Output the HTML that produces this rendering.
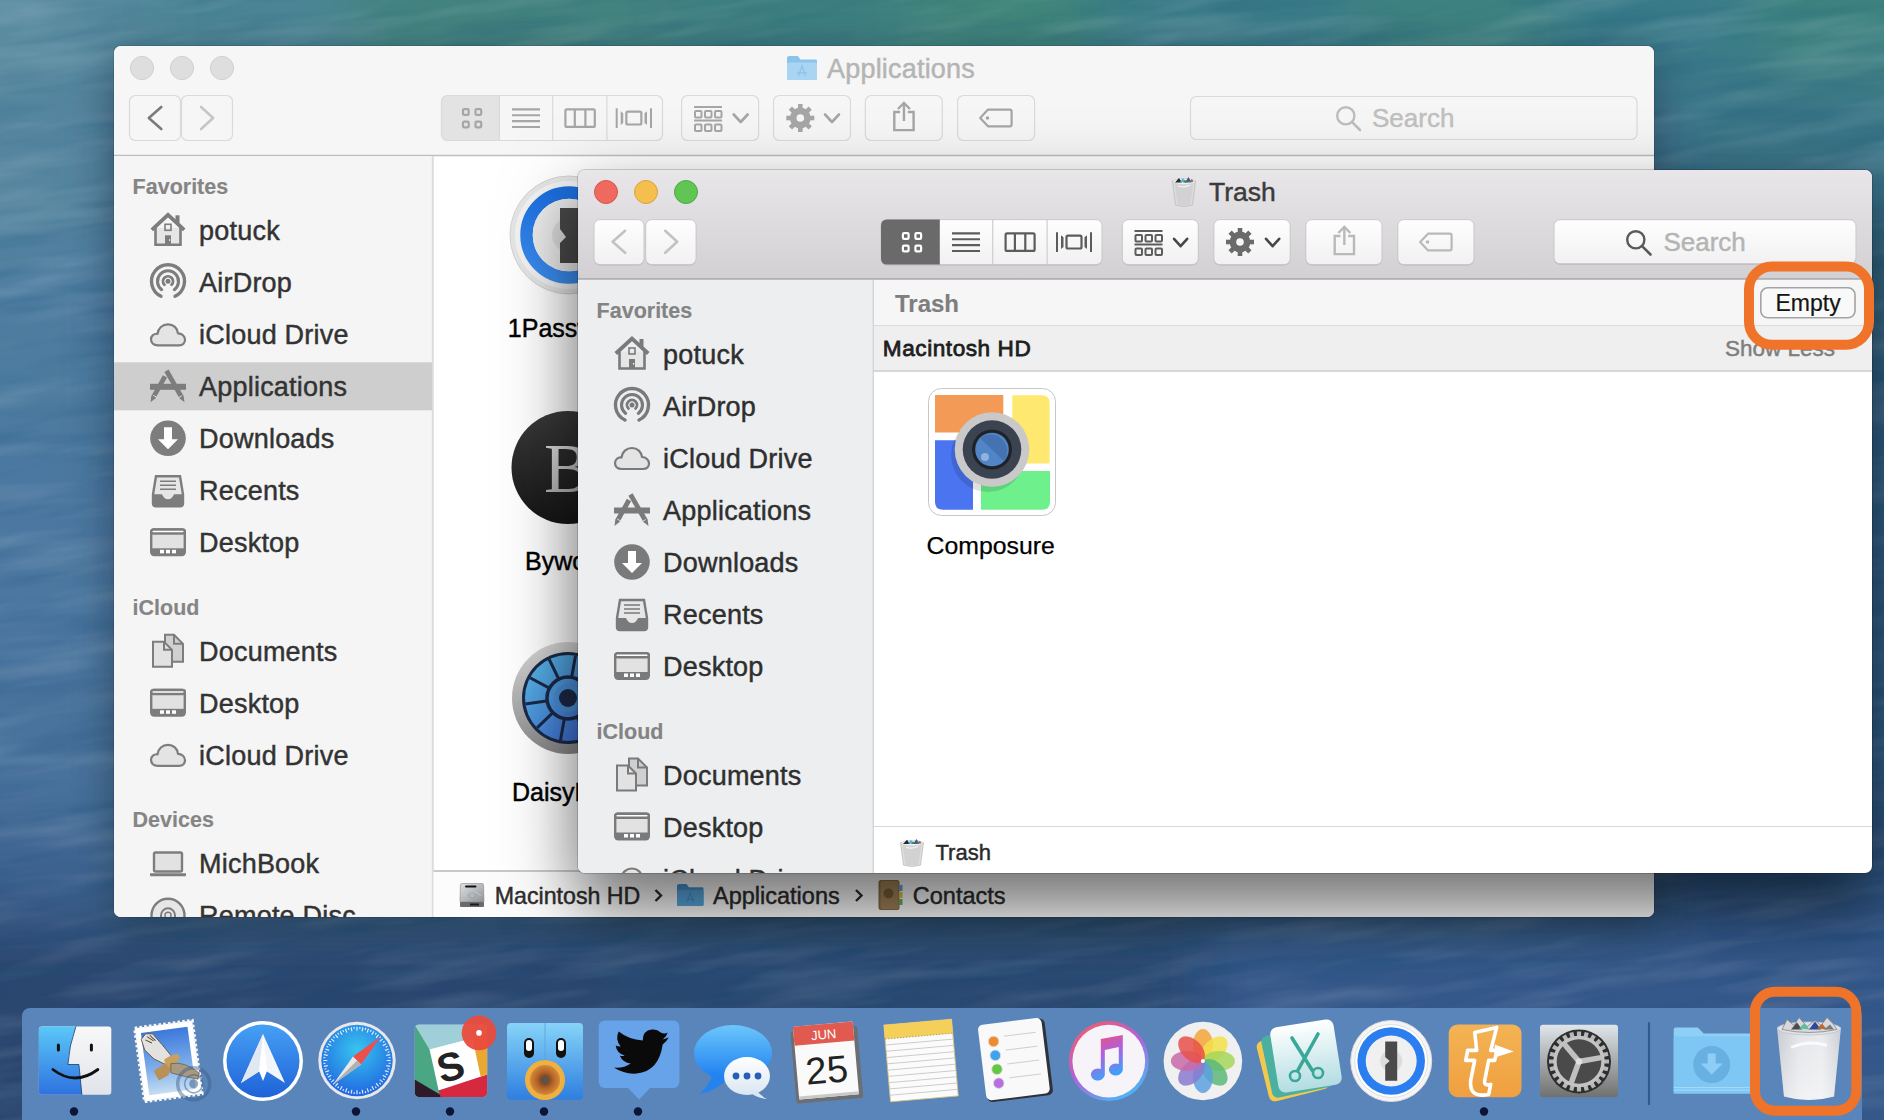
<!DOCTYPE html><html><head><meta charset="utf-8"><style>
*{box-sizing:border-box;margin:0;padding:0}
html,body{width:1884px;height:1120px;overflow:hidden}
body{position:relative;font-family:"Liberation Sans",sans-serif;background:#3f6c8c}
.abs{position:absolute}
.win{position:absolute;overflow:hidden}


</style></head><body>
<svg class="abs" width="1884" height="1120" style="left:0;top:0"><defs><filter id="wb" x="-20%" y="-20%" width="140%" height="140%"><feGaussianBlur stdDeviation="32"/></filter><filter id="tx" x="0" y="0" width="100%" height="100%"><feTurbulence type="fractalNoise" baseFrequency="0.006 0.045" numOctaves="3" seed="7"/><feColorMatrix type="matrix" values="0 0 0 0 1  0 0 0 0 1  0 0 0 0 1  1.2 0 0 0 -0.55"/></filter></defs><g filter="url(#wb)"><rect x="-200" y="-200" width="350" height="280" fill="#5a8ca0"/><rect x="150" y="-200" width="200" height="280" fill="#4c8594"/><rect x="350" y="-200" width="300" height="280" fill="#43837f"/><rect x="650" y="-200" width="250" height="280" fill="#3c7e80"/><rect x="900" y="-200" width="200" height="280" fill="#40857a"/><rect x="1100" y="-200" width="250" height="280" fill="#3a7b88"/><rect x="1350" y="-200" width="200" height="280" fill="#3e8180"/><rect x="1550" y="-200" width="200" height="280" fill="#3b7c8a"/><rect x="1750" y="-200" width="400" height="280" fill="#3e8280"/><rect x="-200" y="80" width="314" height="170" fill="#55859f"/><rect x="-200" y="250" width="314" height="200" fill="#4e7ba0"/><rect x="-200" y="450" width="314" height="200" fill="#4b77a0"/><rect x="-200" y="650" width="314" height="170" fill="#49729c"/><rect x="-200" y="820" width="314" height="100" fill="#3d6290"/><rect x="1654" y="80" width="500" height="120" fill="#3a7488"/><rect x="1654" y="200" width="500" height="150" fill="#356a88"/><rect x="1654" y="350" width="500" height="200" fill="#33628a"/><rect x="1654" y="550" width="500" height="250" fill="#335f8a"/><rect x="1654" y="800" width="500" height="120" fill="#2d5483"/><rect x="-200" y="920" width="800" height="400" fill="#2a4670"/><rect x="600" y="920" width="600" height="400" fill="#2b4872"/><rect x="1200" y="920" width="1000" height="400" fill="#34598a"/><rect x="114" y="80" width="1540" height="840" fill="#3f6a90"/></g><filter id="tx2" x="0" y="0" width="100%" height="100%"><feTurbulence type="fractalNoise" baseFrequency="0.008 0.06" numOctaves="3" seed="21"/><feColorMatrix type="matrix" values="0 0 0 0 0  0 0 0 0 0.05  0 0 0 0 0.15  -1.3 0 0 0 0.72"/></filter><g transform="rotate(-8 942 560)"><rect x="-200" y="-200" width="2300" height="1500" filter="url(#tx)" opacity="0.25"/><rect x="-200" y="-200" width="2300" height="1500" filter="url(#tx2)" opacity="0.25"/></g></svg>
<div class="win" style="left:114px;top:46px;width:1540px;height:871px;background:#fff;border-radius:7px;box-shadow:0 0 0 1px rgba(0,0,0,0.10),0 10px 40px rgba(0,0,0,0.30)"><svg class="abs" width="1540" height="871" style="left:0;top:0" font-family='"Liberation Sans",sans-serif'><g transform="translate(-114,-46)"><rect x="114" y="46" width="1540" height="109" rx="0" fill="#f6f6f6" /><path d="M114 155.5 H1654" stroke="#bebebe" stroke-width="1.6"/><circle cx="142" cy="68" r="11.6" fill="#dedede" stroke="#d0d0d0" stroke-width="1"/><circle cx="182" cy="68" r="11.6" fill="#dedede" stroke="#d0d0d0" stroke-width="1"/><circle cx="222" cy="68" r="11.6" fill="#dedede" stroke="#d0d0d0" stroke-width="1"/><g transform="translate(787,56)"><path d="M0 2 Q0 0 2 0 H10.8 L13.5 3.6 H28.5 Q30 3.6 30 4.8 V22.5 Q30 24 28.5 24 H1.5 Q0 24 0 22.5 Z" fill="#8cc3ea"/><rect x="0" y="6.5" width="30" height="17.5" rx="1.5" fill="#a9d4f2"/><path d="M11.4 20.4 L15.0 9.6 L18.6 20.4 M9.9 16.8 H20.1" stroke="#8cc3ea" stroke-width="1.2" fill="none"/></g><text x="827" y="77.8" font-size="27" fill="#b4b4b4" stroke="#b4b4b4" stroke-width="0.45" font-weight="400" letter-spacing="0.2">Applications</text><rect x="129.5" y="95.5" width="51" height="45" rx="6" fill="none" stroke="#dadada" stroke-width="1.2" /><rect x="181.5" y="95.5" width="51" height="45" rx="6" fill="none" stroke="#dadada" stroke-width="1.2" /><path d="M161.3 107 L148.8 118 L161.3 129" fill="none" stroke="#7b7b7b" stroke-width="2.6" stroke-linecap="round" stroke-linejoin="round"/><path d="M201.1 107 L213.1 118 L201.1 129" fill="none" stroke="#c6c6c6" stroke-width="2.6" stroke-linecap="round" stroke-linejoin="round"/><path d="M447.5 95.5 H499.4 V140.5 H447.5 Q441.5 140.5 441.5 134.5 V101.5 Q441.5 95.5 447.5 95.5Z" fill="#e3e3e3"/><rect x="441.5" y="95.5" width="221" height="45" rx="6" fill="none" stroke="#dadada" stroke-width="1.2" /><path d="M499.4 96 V140" stroke="#dadada" stroke-width="1.2"/><path d="M552.7 96 V140" stroke="#dadada" stroke-width="1.2"/><path d="M606.9 96 V140" stroke="#dadada" stroke-width="1.2"/><rect x="463.0" y="109.2" width="5.7" height="5.7" rx="1.2" fill="none" stroke="#a6a6a6" stroke-width="2.2"/><rect x="463.0" y="121.7" width="5.7" height="5.7" rx="1.2" fill="none" stroke="#a6a6a6" stroke-width="2.2"/><rect x="475.5" y="109.2" width="5.7" height="5.7" rx="1.2" fill="none" stroke="#a6a6a6" stroke-width="2.2"/><rect x="475.5" y="121.7" width="5.7" height="5.7" rx="1.2" fill="none" stroke="#a6a6a6" stroke-width="2.2"/><path d="M512 109.40 H540" stroke="#a6a6a6" stroke-width="2.2"/><path d="M512 115.27 H540" stroke="#a6a6a6" stroke-width="2.2"/><path d="M512 121.13 H540" stroke="#a6a6a6" stroke-width="2.2"/><path d="M512 127.00 H540" stroke="#a6a6a6" stroke-width="2.2"/><rect x="565.4" y="109.3" width="29.400000000000002" height="17.6" rx="1.5" fill="none" stroke="#a6a6a6" stroke-width="2.2"/><path d="M574.8 109.2 V127.0 M585.4 109.2 V127.0" stroke="#a6a6a6" stroke-width="2.2"/><rect x="626.35" y="111.7" width="15" height="12.8" rx="1.5" fill="none" stroke="#a6a6a6" stroke-width="2.2"/><path d="M616.7 108.2 V128.0 M651.0 108.2 V128.0" stroke="#a6a6a6" stroke-width="2"/><path d="M620.7 111.2 L623.2 113.2 V123.0 L620.7 125.0 Z" fill="#a6a6a6"/><path d="M647.0 111.2 L644.5 113.2 V123.0 L647.0 125.0 Z" fill="#a6a6a6"/><rect x="681.6" y="95.5" width="77" height="45" rx="6" fill="none" stroke="#dadada" stroke-width="1.2" /><path d="M694 107 H722 M694 120.5 H722" stroke="#a6a6a6" stroke-width="2"/><rect x="695" y="111" width="6.5" height="6.5" rx="1" fill="none" stroke="#a6a6a6" stroke-width="2"/><rect x="705" y="111" width="6.5" height="6.5" rx="1" fill="none" stroke="#a6a6a6" stroke-width="2"/><rect x="715" y="111" width="6.5" height="6.5" rx="1" fill="none" stroke="#a6a6a6" stroke-width="2"/><rect x="695" y="124.5" width="6.5" height="6.5" rx="1" fill="none" stroke="#a6a6a6" stroke-width="2"/><rect x="705" y="124.5" width="6.5" height="6.5" rx="1" fill="none" stroke="#a6a6a6" stroke-width="2"/><rect x="715" y="124.5" width="6.5" height="6.5" rx="1" fill="none" stroke="#a6a6a6" stroke-width="2"/><path d="M733.7 114.5 L740.7 122.0 L747.7 114.5" fill="none" stroke="#a6a6a6" stroke-width="2.6" stroke-linecap="round" stroke-linejoin="round"/><rect x="773.5" y="95.5" width="77" height="45" rx="6" fill="none" stroke="#dadada" stroke-width="1.2" /><rect x="798.0" y="104" width="4.6" height="14" fill="#a6a6a6" transform="rotate(0 800.3 118)"/><rect x="798.0" y="104" width="4.6" height="14" fill="#a6a6a6" transform="rotate(45 800.3 118)"/><rect x="798.0" y="104" width="4.6" height="14" fill="#a6a6a6" transform="rotate(90 800.3 118)"/><rect x="798.0" y="104" width="4.6" height="14" fill="#a6a6a6" transform="rotate(135 800.3 118)"/><rect x="798.0" y="104" width="4.6" height="14" fill="#a6a6a6" transform="rotate(180 800.3 118)"/><rect x="798.0" y="104" width="4.6" height="14" fill="#a6a6a6" transform="rotate(225 800.3 118)"/><rect x="798.0" y="104" width="4.6" height="14" fill="#a6a6a6" transform="rotate(270 800.3 118)"/><rect x="798.0" y="104" width="4.6" height="14" fill="#a6a6a6" transform="rotate(315 800.3 118)"/><circle cx="800.3" cy="118" r="10.4" fill="#a6a6a6"/><circle cx="800.3" cy="118" r="3.8" fill="#f6f6f6"/><path d="M825 114.5 L832.0 122.0 L839 114.5" fill="none" stroke="#a6a6a6" stroke-width="2.6" stroke-linecap="round" stroke-linejoin="round"/><rect x="865.3" y="95.5" width="77" height="45" rx="6" fill="none" stroke="#dadada" stroke-width="1.2" /><path d="M900.1 112 H894.3000000000001 V130.10000000000002 H913.6 V112 H907.8000000000001" fill="none" stroke="#a6a6a6" stroke-width="2.4"/><path d="M903.95 121 V103.5" stroke="#a6a6a6" stroke-width="2.4"/><path d="M897.95 109 L903.95 103 L909.95 109" fill="none" stroke="#a6a6a6" stroke-width="2.4" stroke-linejoin="miter"/><rect x="957.6" y="95.5" width="77" height="45" rx="6" fill="none" stroke="#dadada" stroke-width="1.2" /><path d="M988 109.60000000000001 H1009.8 Q1011.5999999999999 109.60000000000001 1011.5999999999999 111.4 V124.5 Q1011.5999999999999 126.3 1009.8 126.3 H988 L980.2 117.95 Z" fill="none" stroke="#a6a6a6" stroke-width="2.2" stroke-linejoin="round"/><circle cx="987.5" cy="117.95" r="1.8" fill="#a6a6a6"/><rect x="1190.5" y="96.5" width="446.5" height="43" rx="6" fill="none" stroke="#dadada" stroke-width="1.2" /><circle cx="1345.8" cy="115.8" r="8.6" fill="none" stroke="#bdbdbd" stroke-width="2.4"/><path d="M1352.1 122.1 L1360 130" stroke="#bdbdbd" stroke-width="2.6" stroke-linecap="round"/><text x="1372" y="127.4" font-size="26" fill="#c0c0c0" stroke="#c0c0c0" stroke-width="0.45" font-weight="400" >Search</text><rect x="114" y="156.3" width="318.5" height="871" rx="0" fill="#f5f5f5" /><path d="M432.8 156 V917" stroke="#dcdcdc" stroke-width="2"/><rect x="114" y="362.3" width="318" height="48" rx="0" fill="#cecece" /><text x="132.6" y="194.3" font-size="21.5" fill="#858585" stroke="#858585" stroke-width="0.15" font-weight="700" >Favorites</text><g transform="translate(150,212.3)">
<path d="M5.5 15.5 V32.5 H30.5 V15.5" fill="#e6e6e6" stroke="#7d7d7d" stroke-width="2.6" stroke-linejoin="miter"/>
<path d="M1.8 17.5 L18 2.6 L34.2 17.5" fill="none" stroke="#7d7d7d" stroke-width="3.8" stroke-linejoin="miter"/>
<rect x="25.5" y="3" width="4" height="8" fill="#7d7d7d"/>
<rect x="15" y="12" width="6" height="6" fill="none" stroke="#7d7d7d" stroke-width="1.6"/>
<rect x="15" y="23" width="6" height="10" fill="#7d7d7d"/>
<rect x="19" y="27" width="1.2" height="1.5" fill="#fff"/>
</g><text x="199" y="240.3" font-size="27" fill="#333333" stroke="#333333" stroke-width="0.45" font-weight="400" letter-spacing="0.22">potuck</text><g transform="translate(168,281.3)" fill="none" stroke="#7d7d7d" stroke-linecap="round"><path d="M-6.97 14.95 A16.5 16.5 0 1 1 6.97 14.95" stroke-width="3.4"/><path d="M-6.32 8.39 A10.5 10.5 0 1 1 6.32 8.39" stroke-width="3.1"/><path d="M-3.54 3.54 A5.0 5.0 0 1 1 3.54 3.54" stroke-width="2.8"/><circle cx="0" cy="0" r="2.5" fill="#7d7d7d" stroke="none"/></g><text x="199" y="292.3" font-size="27" fill="#333333" stroke="#333333" stroke-width="0.45" font-weight="400" letter-spacing="0.22">AirDrop</text><g transform="translate(150,322.3)"><path d="M8 23 C3 23 1 20 1 17 C1 13.5 4 11 7.5 11.5 C8 6 12.5 2 18 2 C23.5 2 27.5 6 28 11 C32 11 35 14 35 17.5 C35 20.5 33 23 29 23 Z" fill="#e4e4e4" stroke="#7d7d7d" stroke-width="2.2" stroke-linejoin="round"/></g><text x="199" y="344.3" font-size="27" fill="#333333" stroke="#333333" stroke-width="0.45" font-weight="400" letter-spacing="0.22">iCloud Drive</text><g transform="translate(168,385.3)"><rect x="-18" y="-1.5" width="36" height="6" fill="#7d7d7d"/><path d="M-17.50 17.00 L-12.48 12.93 L-0.90 -7.83 L-5.10 -10.17 L-16.67 10.59 Z" fill="#7d7d7d"/><path d="M-14.8 10 L-10.5 12.5" stroke="#e0e0e0" stroke-width="1"/><path d="M16.50 17.00 L15.61 10.60 L0.58 -15.69 L-3.58 -13.31 L11.44 12.98 Z" fill="#7d7d7d"/><path d="M13.8 10.5 L9.5 13" stroke="#e0e0e0" stroke-width="1"/></g><text x="199" y="396.3" font-size="27" fill="#333333" stroke="#333333" stroke-width="0.45" font-weight="400" letter-spacing="0.22">Applications</text><g transform="translate(168,438.3)"><circle r="17.8" fill="#7d7d7d"/>
<path d="M-4 -11 H4 V1 H10 L0 11 L-10 1 H-4 Z" fill="#fff"/></g><text x="199" y="448.3" font-size="27" fill="#333333" stroke="#333333" stroke-width="0.45" font-weight="400" letter-spacing="0.22">Downloads</text><g transform="translate(152,474.3)">
<path d="M4 2 H28 L31 20 V29 Q31 32 28 32 H4 Q1 32 1 29 V20 Z" fill="#e6e6e6" stroke="#7d7d7d" stroke-width="2.4"/>
<path d="M1 20 H10 Q12 25 16 25 Q20 25 22 20 H31 V29 Q31 32 28 32 H4 Q1 32 1 29 Z" fill="#7d7d7d"/>
<path d="M8 7 H24 M8 11 H24 M8 15 H24" stroke="#7d7d7d" stroke-width="1.6"/>
</g><text x="199" y="500.3" font-size="27" fill="#333333" stroke="#333333" stroke-width="0.45" font-weight="400" letter-spacing="0.22">Recents</text><g transform="translate(150,528.3)">
<rect x="1.2" y="1.2" width="33.6" height="25.6" rx="3" fill="#e2e2e2" stroke="#7d7d7d" stroke-width="2.4"/>
<rect x="1.2" y="1.2" width="33.6" height="4" rx="2" fill="#fff" stroke="#7d7d7d" stroke-width="2.4"/>
<rect x="1.2" y="20" width="33.6" height="6.8" fill="#7d7d7d"/>
<rect x="10" y="21.5" width="4" height="3.5" fill="#fff"/><rect x="16" y="21.5" width="4" height="3.5" fill="#fff"/><rect x="22" y="21.5" width="4" height="3.5" fill="#fff"/>
</g><text x="199" y="552.3" font-size="27" fill="#333333" stroke="#333333" stroke-width="0.45" font-weight="400" letter-spacing="0.22">Desktop</text><text x="132.6" y="614.8" font-size="21.5" fill="#858585" stroke="#858585" stroke-width="0.15" font-weight="700" >iCloud</text><g transform="translate(152,633.8)">
<path d="M13 1 H22 L31 10 V28 H13 Z" fill="#d0d0d0" stroke="#7d7d7d" stroke-width="2"/>
<path d="M22 1 V10 H31" fill="none" stroke="#7d7d7d" stroke-width="2"/>
<path d="M1 8 H12 L20 16 V33 H1 Z" fill="#e2e2e2" stroke="#7d7d7d" stroke-width="2"/>
<path d="M12 8 V16 H20" fill="none" stroke="#7d7d7d" stroke-width="2"/>
</g><text x="199" y="660.8" font-size="27" fill="#333333" stroke="#333333" stroke-width="0.45" font-weight="400" letter-spacing="0.22">Documents</text><g transform="translate(150,688.8)">
<rect x="1.2" y="1.2" width="33.6" height="25.6" rx="3" fill="#e2e2e2" stroke="#7d7d7d" stroke-width="2.4"/>
<rect x="1.2" y="1.2" width="33.6" height="4" rx="2" fill="#fff" stroke="#7d7d7d" stroke-width="2.4"/>
<rect x="1.2" y="20" width="33.6" height="6.8" fill="#7d7d7d"/>
<rect x="10" y="21.5" width="4" height="3.5" fill="#fff"/><rect x="16" y="21.5" width="4" height="3.5" fill="#fff"/><rect x="22" y="21.5" width="4" height="3.5" fill="#fff"/>
</g><text x="199" y="712.8" font-size="27" fill="#333333" stroke="#333333" stroke-width="0.45" font-weight="400" letter-spacing="0.22">Desktop</text><g transform="translate(150,742.8)"><path d="M8 23 C3 23 1 20 1 17 C1 13.5 4 11 7.5 11.5 C8 6 12.5 2 18 2 C23.5 2 27.5 6 28 11 C32 11 35 14 35 17.5 C35 20.5 33 23 29 23 Z" fill="#e4e4e4" stroke="#7d7d7d" stroke-width="2.2" stroke-linejoin="round"/></g><text x="199" y="764.8" font-size="27" fill="#333333" stroke="#333333" stroke-width="0.45" font-weight="400" letter-spacing="0.22">iCloud Drive</text><text x="132.6" y="827.3" font-size="21.5" fill="#858585" stroke="#858585" stroke-width="0.15" font-weight="700" >Devices</text><g transform="translate(150,851.3)">
<rect x="4" y="1.2" width="28" height="19" rx="1.5" fill="#e2e2e2" stroke="#7d7d7d" stroke-width="2.4"/>
<path d="M0 22 H36 V24 Q36 25 35 25 H1 Q0 25 0 24 Z" fill="#7d7d7d"/>
</g><text x="199" y="873.3" font-size="27" fill="#333333" stroke="#333333" stroke-width="0.45" font-weight="400" letter-spacing="0.22">MichBook</text><g transform="translate(168,915.3)"><circle r="16.5" fill="#e6e6e6" stroke="#7d7d7d" stroke-width="2.4"/>
<circle r="7" fill="none" stroke="#7d7d7d" stroke-width="2"/><circle r="3" fill="none" stroke="#7d7d7d" stroke-width="1.5"/></g><text x="199" y="925.3" font-size="27" fill="#333333" stroke="#333333" stroke-width="0.45" font-weight="400" letter-spacing="0.22">Remote Disc</text><defs><linearGradient id="op1" x1="0" y1="0" x2="0" y2="1"><stop offset="0" stop-color="#1d6fe0"/><stop offset="1" stop-color="#3c8ef0"/></linearGradient></defs><circle cx="569" cy="235" r="59" fill="#e6e6e6" stroke="#d2d2d2" stroke-width="1"/><circle cx="569" cy="235" r="54" fill="#f3f3f3"/><circle cx="569" cy="235" r="42.5" fill="none" stroke="url(#op1)" stroke-width="12.5"/><circle cx="569" cy="235" r="36.3" fill="#ececec"/><circle cx="569" cy="235" r="17" fill="#dcdcdc"/><path d="M560 208 H584 V263 H560 V243 L566 237 L560 229 Z" fill="#4a4a4a"/><text x="507.8" y="337.4" font-size="25" fill="#000" stroke="#000" stroke-width="0.45" font-weight="400" >1Password 6</text><defs><linearGradient id="bwg" x1="0" y1="0" x2="0" y2="1"><stop offset="0" stop-color="#3a3a3a"/><stop offset="1" stop-color="#161616"/></linearGradient><linearGradient id="bwb" x1="0" y1="0" x2="0" y2="1"><stop offset="0" stop-color="#e8e8e8"/><stop offset="1" stop-color="#a8a8a8"/></linearGradient></defs><circle cx="568" cy="467.5" r="56.5" fill="url(#bwg)"/><text x="544" y="492" font-family="Liberation Serif" font-size="70" fill="url(#bwb)">B</text><text x="525" y="570" font-size="25" fill="#000" stroke="#000" stroke-width="0.45" font-weight="400" >Byword</text><defs><linearGradient id="ddg" x1="0" y1="0" x2="0" y2="1"><stop offset="0" stop-color="#d8d8d8"/><stop offset="1" stop-color="#8a8a8a"/></linearGradient><linearGradient id="ddb" x1="0" y1="0" x2="1" y2="1"><stop offset="0" stop-color="#5ac0e8"/><stop offset="1" stop-color="#3a5ad0"/></linearGradient></defs><circle cx="568" cy="698" r="56" fill="url(#ddg)"/><circle cx="568" cy="698" r="46" fill="#1c2a48"/><circle cx="568" cy="698" r="43" fill="url(#ddb)"/><path d="M571.5 678.3 L575.5 655.7 M582.4 684.1 L598.9 668.1 M587.8 695.2 L610.6 692.0 M585.7 707.4 L606.0 718.2 M576.8 716.0 L586.8 736.6 M564.5 717.7 L560.5 740.3 M553.6 711.9 L537.1 727.9 M548.2 700.8 L525.4 704.0 M550.3 688.6 L530.0 677.8 M559.2 680.0 L549.2 659.4" stroke="#1c2a48" stroke-width="3"/><circle cx="568" cy="698" r="21" fill="none" stroke="#1c2a48" stroke-width="3.5"/><circle cx="568" cy="698" r="14" fill="#4a90d8"/><circle cx="568" cy="698" r="9" fill="#1c2a48"/><text x="512" y="801" font-size="25" fill="#000" stroke="#000" stroke-width="0.45" font-weight="400" >DaisyDisk</text><rect x="433.5" y="871" width="1220.5" height="46" rx="0" fill="#fcfcfc" /><path d="M433.5 871 H1654" stroke="#c9c9c9" stroke-width="2"/><g transform="translate(460,883)"><defs><linearGradient id="hdg" x1="0" y1="0" x2="1" y2="1"><stop offset="0" stop-color="#dfe3e6"/><stop offset="1" stop-color="#8e9296"/></linearGradient></defs><path d="M2 0.5 H22 Q23.5 0.5 23.6 2 L24 19 H0 L0.4 2 Q0.5 0.5 2 0.5Z" fill="url(#hdg)" stroke="#8a8a8a" stroke-width="0.6"/><rect x="5" y="2.5" width="11.5" height="2" rx="1" fill="#111"/><ellipse cx="12" cy="12" rx="3.4" ry="3" fill="#b4b8bc" stroke="#8a8e92" stroke-width="0.5"/><path d="M3 13 Q12 4 21 13" fill="none" stroke="#c8cbce" stroke-width="0.8"/><rect x="0" y="19" width="24" height="5" rx="1" fill="#6a6a6a"/><rect x="10" y="20.5" width="9" height="2" fill="#1a1a1a"/></g><text x="494.7" y="904" font-size="23.2" fill="#2e2e2e" stroke="#2e2e2e" stroke-width="0.45" font-weight="400" >Macintosh HD</text><path d="M655.5 890 L661 895.5 L655.5 901" fill="none" stroke="#2e2e2e" stroke-width="2.4"/><g transform="translate(677,884)"><path d="M0 2 Q0 0 2 0 H9.5 L11.9 3.3 H25.0 Q26.5 3.3 26.5 4.4 V20.5 Q26.5 22 25.0 22 H1.5 Q0 22 0 20.5 Z" fill="#4a96cf"/><rect x="0" y="5.9" width="26.5" height="16.1" rx="1.5" fill="#5aa9e0"/><path d="M10.1 18.7 L13.2 8.8 L16.4 18.7 M8.7 15.4 H17.8" stroke="#4a96cf" stroke-width="1.2" fill="none"/></g><text x="713" y="904" font-size="23.5" fill="#2e2e2e" stroke="#2e2e2e" stroke-width="0.45" font-weight="400" >Applications</text><path d="M856 890 L861.5 895.5 L856 901" fill="none" stroke="#2e2e2e" stroke-width="2.4"/><g transform="translate(878.5,880)"><rect x="0" y="0" width="21" height="30" rx="2.5" fill="#8a6d43"/><rect x="2" y="1" width="18" height="28" rx="2" fill="#a3845a"/><rect x="20.5" y="5" width="3.5" height="6" fill="#6aa0d0"/><rect x="20.5" y="12" width="3.5" height="6" fill="#e0c040"/><rect x="20.5" y="19" width="3.5" height="6" fill="#70b060"/><circle cx="10.0" cy="13.5" r="5" fill="#7a5e38"/></g><text x="912.8" y="904" font-size="23.5" fill="#2e2e2e" stroke="#2e2e2e" stroke-width="0.45" font-weight="400" >Contacts</text></g></svg></div>
<div class="win" style="left:578px;top:170px;width:1294px;height:703px;background:#fff;border-radius:7px;box-shadow:0 0 0 1px rgba(0,0,0,0.16),0 28px 75px rgba(0,0,0,0.5),0 40px 50px rgba(0,0,0,0.15)"><svg class="abs" width="1294" height="703" style="left:0;top:0" font-family='"Liberation Sans",sans-serif'><g transform="translate(-578,-170)"><defs><linearGradient id="tbg" x1="0" y1="0" x2="0" y2="1"><stop offset="0" stop-color="#e8e6e8"/><stop offset="1" stop-color="#d2d0d2"/></linearGradient><linearGradient id="btng" x1="0" y1="0" x2="0" y2="1"><stop offset="0" stop-color="#fefefe"/><stop offset="1" stop-color="#f1f1f1"/></linearGradient></defs><rect x="578" y="170" width="1294" height="109" rx="0" fill="url(#tbg)" /><path d="M578 279 H1872" stroke="#a8a6a8" stroke-width="1.6"/><circle cx="606" cy="192" r="11.5" fill="#ef6a5e" stroke="#d8554a" stroke-width="1"/><circle cx="646" cy="192" r="11.5" fill="#f5bf4f" stroke="#dca33a" stroke-width="1"/><circle cx="686" cy="192" r="11.5" fill="#61c554" stroke="#4ea843" stroke-width="1"/><g transform="translate(1172,176) scale(1.000,1.000)"><path d="M0.5 5 Q12 3 23.5 5 L20.5 29 Q12 32 3.5 29 Z" fill="#dcdcdc" stroke="#bdbdbd" stroke-width="0.8"/><path d="M3 8 L5.5 28 Q12 30 18.5 28 L21 8 Q12 10 3 8Z" fill="#d2d2d2"/><path d="M6 10 Q12 12 18 9" fill="none" stroke="#f4f4f4" stroke-width="1.2"/><ellipse cx="12" cy="5.5" rx="11" ry="3" fill="#f2f2f2" stroke="#c8c8c8" stroke-width="0.6"/><path d="M3 6.5 L7 2 L10 6.5Z" fill="#2a2a2a"/><path d="M8 5.5 L11 2 L14 6.5Z" fill="#5ab0e0"/><path d="M13 6.5 L16.5 1 L19.5 6.5Z" fill="#3a5aa0"/><path d="M16 6 L20 3 L21.5 6Z" fill="#9a6a50"/><path d="M11 6.5 L13 3.5 L15 6.5Z" fill="#3a8a50"/></g><text x="1209" y="201.4" font-size="26.5" fill="#3b3b3b" stroke="#3b3b3b" stroke-width="0.45" font-weight="400" >Trash</text><rect x="594" y="220.6" width="50" height="45" rx="6" fill="#b9b7b9"/><rect x="594" y="219.6" width="50" height="45" rx="6" fill="url(#btng)" stroke="#c9c7c9" stroke-width="1"/><rect x="645.7" y="220.6" width="50.4" height="45" rx="6" fill="#b9b7b9"/><rect x="645.7" y="219.6" width="50.4" height="45" rx="6" fill="url(#btng)" stroke="#c9c7c9" stroke-width="1"/><path d="M625.1 230.8 L612.6 241.8 L625.1 252.8" fill="none" stroke="#c2c2c2" stroke-width="2.6" stroke-linecap="round" stroke-linejoin="round"/><path d="M665.2 230.8 L677.2 241.8 L665.2 252.8" fill="none" stroke="#c2c2c2" stroke-width="2.6" stroke-linecap="round" stroke-linejoin="round"/><rect x="881" y="220.6" width="221" height="45" rx="6" fill="#b9b7b9"/><rect x="881" y="219.6" width="221" height="45" rx="6" fill="url(#btng)" stroke="#c9c7c9" stroke-width="1"/><path d="M887 219.6 H939.8 V264.6 H887 Q881 264.6 881 258.6 V225.6 Q881 219.6 887 219.6Z" fill="#6a6a6a"/><path d="M992.7 220 V264" stroke="#cfcdcf" stroke-width="1.2"/><path d="M1047.1 220 V264" stroke="#cfcdcf" stroke-width="1.2"/><rect x="902.9" y="233.2" width="5.7" height="5.7" rx="1.2" fill="none" stroke="#ffffff" stroke-width="2.2"/><rect x="902.9" y="245.7" width="5.7" height="5.7" rx="1.2" fill="none" stroke="#ffffff" stroke-width="2.2"/><rect x="915.4" y="233.2" width="5.7" height="5.7" rx="1.2" fill="none" stroke="#ffffff" stroke-width="2.2"/><rect x="915.4" y="245.7" width="5.7" height="5.7" rx="1.2" fill="none" stroke="#ffffff" stroke-width="2.2"/><path d="M952 233.40 H980" stroke="#5c5c5c" stroke-width="2.2"/><path d="M952 239.27 H980" stroke="#5c5c5c" stroke-width="2.2"/><path d="M952 245.13 H980" stroke="#5c5c5c" stroke-width="2.2"/><path d="M952 251.00 H980" stroke="#5c5c5c" stroke-width="2.2"/><rect x="1005.6" y="233.29999999999998" width="29.0" height="17.6" rx="1.5" fill="none" stroke="#5c5c5c" stroke-width="2.2"/><path d="M1014.9 233.2 V251.0 M1025.3 233.2 V251.0" stroke="#5c5c5c" stroke-width="2.2"/><rect x="1066.5" y="235.7" width="15" height="12.8" rx="1.5" fill="none" stroke="#5c5c5c" stroke-width="2.2"/><path d="M1057 232.2 V252.0 M1091 232.2 V252.0" stroke="#5c5c5c" stroke-width="2"/><path d="M1061 235.2 L1063.5 237.2 V247.0 L1061 249.0 Z" fill="#5c5c5c"/><path d="M1087 235.2 L1084.5 237.2 V247.0 L1087 249.0 Z" fill="#5c5c5c"/><rect x="1122.3" y="220.6" width="76" height="45" rx="6" fill="#b9b7b9"/><rect x="1122.3" y="219.6" width="76" height="45" rx="6" fill="url(#btng)" stroke="#c9c7c9" stroke-width="1"/><path d="M1134.5 231 H1162.5 M1134.5 244.5 H1162.5" stroke="#5c5c5c" stroke-width="2"/><rect x="1135.5" y="235" width="6.5" height="6.5" rx="1" fill="none" stroke="#5c5c5c" stroke-width="2"/><rect x="1145.5" y="235" width="6.5" height="6.5" rx="1" fill="none" stroke="#5c5c5c" stroke-width="2"/><rect x="1155.5" y="235" width="6.5" height="6.5" rx="1" fill="none" stroke="#5c5c5c" stroke-width="2"/><rect x="1135.5" y="248.5" width="6.5" height="6.5" rx="1" fill="none" stroke="#5c5c5c" stroke-width="2"/><rect x="1145.5" y="248.5" width="6.5" height="6.5" rx="1" fill="none" stroke="#5c5c5c" stroke-width="2"/><rect x="1155.5" y="248.5" width="6.5" height="6.5" rx="1" fill="none" stroke="#5c5c5c" stroke-width="2"/><path d="M1174 238.8 L1180.6 246.20000000000002 L1187.2 238.8" fill="none" stroke="#484848" stroke-width="2.6" stroke-linecap="round" stroke-linejoin="round"/><rect x="1213.9" y="220.6" width="76.3" height="45" rx="6" fill="#b9b7b9"/><rect x="1213.9" y="219.6" width="76.3" height="45" rx="6" fill="url(#btng)" stroke="#c9c7c9" stroke-width="1"/><rect x="1237.7" y="228" width="4.6" height="14" fill="#6a6a6a" transform="rotate(0 1240 242)"/><rect x="1237.7" y="228" width="4.6" height="14" fill="#6a6a6a" transform="rotate(45 1240 242)"/><rect x="1237.7" y="228" width="4.6" height="14" fill="#6a6a6a" transform="rotate(90 1240 242)"/><rect x="1237.7" y="228" width="4.6" height="14" fill="#6a6a6a" transform="rotate(135 1240 242)"/><rect x="1237.7" y="228" width="4.6" height="14" fill="#6a6a6a" transform="rotate(180 1240 242)"/><rect x="1237.7" y="228" width="4.6" height="14" fill="#6a6a6a" transform="rotate(225 1240 242)"/><rect x="1237.7" y="228" width="4.6" height="14" fill="#6a6a6a" transform="rotate(270 1240 242)"/><rect x="1237.7" y="228" width="4.6" height="14" fill="#6a6a6a" transform="rotate(315 1240 242)"/><circle cx="1240" cy="242" r="10.4" fill="#6a6a6a"/><circle cx="1240" cy="242" r="3.8" fill="#f6f6f6"/><path d="M1266 238.8 L1272.6 246.20000000000002 L1279.2 238.8" fill="none" stroke="#484848" stroke-width="2.6" stroke-linecap="round" stroke-linejoin="round"/><rect x="1305.8" y="220.6" width="76.2" height="45" rx="6" fill="#b9b7b9"/><rect x="1305.8" y="219.6" width="76.2" height="45" rx="6" fill="url(#btng)" stroke="#c9c7c9" stroke-width="1"/><path d="M1340.5 236 H1334.7 V254.10000000000002 H1354.0 V236 H1348.2" fill="none" stroke="#b9b9b9" stroke-width="2.4"/><path d="M1344.35 245 V227.5" stroke="#b9b9b9" stroke-width="2.4"/><path d="M1338.35 233 L1344.35 227 L1350.35 233" fill="none" stroke="#b9b9b9" stroke-width="2.4" stroke-linejoin="miter"/><rect x="1397.8" y="220.6" width="76.2" height="45" rx="6" fill="#b9b7b9"/><rect x="1397.8" y="219.6" width="76.2" height="45" rx="6" fill="url(#btng)" stroke="#c9c7c9" stroke-width="1"/><path d="M1428 233.7 H1449.8 Q1451.6 233.7 1451.6 235.5 V248.6 Q1451.6 250.4 1449.8 250.4 H1428 L1420.2 242.05 Z" fill="none" stroke="#b9b9b9" stroke-width="2.2" stroke-linejoin="round"/><circle cx="1427.5" cy="242.05" r="1.8" fill="#b9b9b9"/><rect x="1554" y="220.7" width="302" height="44" rx="6" fill="#b9b7b9"/><rect x="1554" y="219.7" width="302" height="44" rx="6" fill="url(#btng)" stroke="#c9c7c9" stroke-width="1"/><circle cx="1635.8" cy="239.79999999999998" r="8.6" fill="none" stroke="#5a5a5a" stroke-width="2.4"/><path d="M1642.1 246.1 L1650.5 254.5" stroke="#5a5a5a" stroke-width="2.6" stroke-linecap="round"/><text x="1663.4" y="251" font-size="26" fill="#b4b4b4" stroke="#b4b4b4" stroke-width="0.45" font-weight="400" >Search</text><rect x="578" y="280" width="295" height="703" rx="0" fill="#edeef0" /><path d="M873.3 280 V873" stroke="#d4d4d4" stroke-width="1.4"/><text x="596.6" y="318" font-size="21.5" fill="#838383" stroke="#838383" stroke-width="0.15" font-weight="700" >Favorites</text><g transform="translate(614,336)">
<path d="M5.5 15.5 V32.5 H30.5 V15.5" fill="#e6e6e6" stroke="#7a7a7a" stroke-width="2.6" stroke-linejoin="miter"/>
<path d="M1.8 17.5 L18 2.6 L34.2 17.5" fill="none" stroke="#7a7a7a" stroke-width="3.8" stroke-linejoin="miter"/>
<rect x="25.5" y="3" width="4" height="8" fill="#7a7a7a"/>
<rect x="15" y="12" width="6" height="6" fill="none" stroke="#7a7a7a" stroke-width="1.6"/>
<rect x="15" y="23" width="6" height="10" fill="#7a7a7a"/>
<rect x="19" y="27" width="1.2" height="1.5" fill="#fff"/>
</g><text x="663" y="364" font-size="27" fill="#2f2f2f" stroke="#2f2f2f" stroke-width="0.45" font-weight="400" letter-spacing="0.22">potuck</text><g transform="translate(632,405)" fill="none" stroke="#7a7a7a" stroke-linecap="round"><path d="M-6.97 14.95 A16.5 16.5 0 1 1 6.97 14.95" stroke-width="3.4"/><path d="M-6.32 8.39 A10.5 10.5 0 1 1 6.32 8.39" stroke-width="3.1"/><path d="M-3.54 3.54 A5.0 5.0 0 1 1 3.54 3.54" stroke-width="2.8"/><circle cx="0" cy="0" r="2.5" fill="#7a7a7a" stroke="none"/></g><text x="663" y="416" font-size="27" fill="#2f2f2f" stroke="#2f2f2f" stroke-width="0.45" font-weight="400" letter-spacing="0.22">AirDrop</text><g transform="translate(614,446)"><path d="M8 23 C3 23 1 20 1 17 C1 13.5 4 11 7.5 11.5 C8 6 12.5 2 18 2 C23.5 2 27.5 6 28 11 C32 11 35 14 35 17.5 C35 20.5 33 23 29 23 Z" fill="#e4e4e4" stroke="#7a7a7a" stroke-width="2.2" stroke-linejoin="round"/></g><text x="663" y="468" font-size="27" fill="#2f2f2f" stroke="#2f2f2f" stroke-width="0.45" font-weight="400" letter-spacing="0.22">iCloud Drive</text><g transform="translate(632,509)"><rect x="-18" y="-1.5" width="36" height="6" fill="#7a7a7a"/><path d="M-17.50 17.00 L-12.48 12.93 L-0.90 -7.83 L-5.10 -10.17 L-16.67 10.59 Z" fill="#7a7a7a"/><path d="M-14.8 10 L-10.5 12.5" stroke="#e0e0e0" stroke-width="1"/><path d="M16.50 17.00 L15.61 10.60 L0.58 -15.69 L-3.58 -13.31 L11.44 12.98 Z" fill="#7a7a7a"/><path d="M13.8 10.5 L9.5 13" stroke="#e0e0e0" stroke-width="1"/></g><text x="663" y="520" font-size="27" fill="#2f2f2f" stroke="#2f2f2f" stroke-width="0.45" font-weight="400" letter-spacing="0.22">Applications</text><g transform="translate(632,562)"><circle r="17.8" fill="#7a7a7a"/>
<path d="M-4 -11 H4 V1 H10 L0 11 L-10 1 H-4 Z" fill="#fff"/></g><text x="663" y="572" font-size="27" fill="#2f2f2f" stroke="#2f2f2f" stroke-width="0.45" font-weight="400" letter-spacing="0.22">Downloads</text><g transform="translate(616,598)">
<path d="M4 2 H28 L31 20 V29 Q31 32 28 32 H4 Q1 32 1 29 V20 Z" fill="#e6e6e6" stroke="#7a7a7a" stroke-width="2.4"/>
<path d="M1 20 H10 Q12 25 16 25 Q20 25 22 20 H31 V29 Q31 32 28 32 H4 Q1 32 1 29 Z" fill="#7a7a7a"/>
<path d="M8 7 H24 M8 11 H24 M8 15 H24" stroke="#7a7a7a" stroke-width="1.6"/>
</g><text x="663" y="624" font-size="27" fill="#2f2f2f" stroke="#2f2f2f" stroke-width="0.45" font-weight="400" letter-spacing="0.22">Recents</text><g transform="translate(614,652)">
<rect x="1.2" y="1.2" width="33.6" height="25.6" rx="3" fill="#e2e2e2" stroke="#7a7a7a" stroke-width="2.4"/>
<rect x="1.2" y="1.2" width="33.6" height="4" rx="2" fill="#fff" stroke="#7a7a7a" stroke-width="2.4"/>
<rect x="1.2" y="20" width="33.6" height="6.8" fill="#7a7a7a"/>
<rect x="10" y="21.5" width="4" height="3.5" fill="#fff"/><rect x="16" y="21.5" width="4" height="3.5" fill="#fff"/><rect x="22" y="21.5" width="4" height="3.5" fill="#fff"/>
</g><text x="663" y="676" font-size="27" fill="#2f2f2f" stroke="#2f2f2f" stroke-width="0.45" font-weight="400" letter-spacing="0.22">Desktop</text><text x="596.6" y="738.5" font-size="21.5" fill="#838383" stroke="#838383" stroke-width="0.15" font-weight="700" >iCloud</text><g transform="translate(616,757.5)">
<path d="M13 1 H22 L31 10 V28 H13 Z" fill="#d0d0d0" stroke="#7a7a7a" stroke-width="2"/>
<path d="M22 1 V10 H31" fill="none" stroke="#7a7a7a" stroke-width="2"/>
<path d="M1 8 H12 L20 16 V33 H1 Z" fill="#e2e2e2" stroke="#7a7a7a" stroke-width="2"/>
<path d="M12 8 V16 H20" fill="none" stroke="#7a7a7a" stroke-width="2"/>
</g><text x="663" y="784.5" font-size="27" fill="#2f2f2f" stroke="#2f2f2f" stroke-width="0.45" font-weight="400" letter-spacing="0.22">Documents</text><g transform="translate(614,812.5)">
<rect x="1.2" y="1.2" width="33.6" height="25.6" rx="3" fill="#e2e2e2" stroke="#7a7a7a" stroke-width="2.4"/>
<rect x="1.2" y="1.2" width="33.6" height="4" rx="2" fill="#fff" stroke="#7a7a7a" stroke-width="2.4"/>
<rect x="1.2" y="20" width="33.6" height="6.8" fill="#7a7a7a"/>
<rect x="10" y="21.5" width="4" height="3.5" fill="#fff"/><rect x="16" y="21.5" width="4" height="3.5" fill="#fff"/><rect x="22" y="21.5" width="4" height="3.5" fill="#fff"/>
</g><text x="663" y="836.5" font-size="27" fill="#2f2f2f" stroke="#2f2f2f" stroke-width="0.45" font-weight="400" letter-spacing="0.22">Desktop</text><g transform="translate(614,866.5)"><path d="M8 23 C3 23 1 20 1 17 C1 13.5 4 11 7.5 11.5 C8 6 12.5 2 18 2 C23.5 2 27.5 6 28 11 C32 11 35 14 35 17.5 C35 20.5 33 23 29 23 Z" fill="#e4e4e4" stroke="#7a7a7a" stroke-width="2.2" stroke-linejoin="round"/></g><text x="663" y="888.5" font-size="27" fill="#2f2f2f" stroke="#2f2f2f" stroke-width="0.45" font-weight="400" letter-spacing="0.22">iCloud Drive</text><rect x="874" y="280" width="998" height="45.5" rx="0" fill="#f6f6f6" /><path d="M874 325.5 H1872" stroke="#dadada" stroke-width="1.2"/><text x="895" y="311.6" font-size="24" fill="#7e7e7e" stroke="#7e7e7e" stroke-width="0.15" font-weight="700" >Trash</text><rect x="1760.8" y="287.8" width="94.2" height="30" rx="7" fill="#f9f9f9" stroke="#a3a3a3" stroke-width="1.6" /><text x="1775.5" y="311" font-size="23" fill="#151515" stroke="#151515" stroke-width="0.2" font-weight="400" >Empty</text><rect x="874" y="326.1" width="998" height="44.6" rx="0" fill="#efefef" /><path d="M874 371 H1872" stroke="#cbcbcb" stroke-width="1.4"/><text x="882.8" y="355.8" font-size="22.6" fill="#1e1e1e" stroke="#1e1e1e" stroke-width="0.8" font-weight="400" letter-spacing="0.55">Macintosh HD</text><text x="1725" y="356.2" font-size="22.5" fill="#7e7e7e" stroke="#7e7e7e" stroke-width="0.45" font-weight="400" >Show Less</text><g transform="translate(928,388)"><rect x="0.5" y="0.5" width="127" height="127" rx="13" fill="#fff" stroke="#c6c6c6" stroke-width="1"/><path d="M7 7 H75.3 V44.6 H7 Z" fill="#f29a56" /><path d="M84.3 7.3 H114 Q121.6 7.3 121.6 15 V75.5 H84.3 Z" fill="#fee86f"/><path d="M7 52.2 H45 V121.8 H15 Q7 121.8 7 114 Z" fill="#4b75f0"/><path d="M53 83 H122 V114 Q122 121.8 114 121.8 H53 Z" fill="#6ef08c"/><circle cx="60" cy="67" r="37" fill="#000" opacity="0.12"/><circle cx="64" cy="61.5" r="37.3" fill="#c9c9c9"/><circle cx="64" cy="61.5" r="29.3" fill="#3c4350"/><circle cx="64" cy="61.5" r="20" fill="#1f2329"/><circle cx="64" cy="61.5" r="16.8" fill="#5185c5"/><path d="M52 50 L76 73 A16.8 16.8 0 0 0 52 50Z" fill="#4572b0"/><circle cx="57" cy="69" r="4" fill="#8eb3e0"/></g><text x="926.6" y="553.9" font-size="24.8" fill="#000" stroke="#000" stroke-width="0.25" font-weight="400" >Composure</text><path d="M874 826.5 H1872" stroke="#d8d8d8" stroke-width="1.2"/><g transform="translate(900,838) scale(1.000,0.935)"><path d="M0.5 5 Q12 3 23.5 5 L20.5 29 Q12 32 3.5 29 Z" fill="#dcdcdc" stroke="#bdbdbd" stroke-width="0.8"/><path d="M3 8 L5.5 28 Q12 30 18.5 28 L21 8 Q12 10 3 8Z" fill="#d2d2d2"/><path d="M6 10 Q12 12 18 9" fill="none" stroke="#f4f4f4" stroke-width="1.2"/><ellipse cx="12" cy="5.5" rx="11" ry="3" fill="#f2f2f2" stroke="#c8c8c8" stroke-width="0.6"/><path d="M3 6.5 L7 2 L10 6.5Z" fill="#2a2a2a"/><path d="M8 5.5 L11 2 L14 6.5Z" fill="#5ab0e0"/><path d="M13 6.5 L16.5 1 L19.5 6.5Z" fill="#3a5aa0"/><path d="M16 6 L20 3 L21.5 6Z" fill="#9a6a50"/><path d="M11 6.5 L13 3.5 L15 6.5Z" fill="#3a8a50"/></g><text x="935.5" y="859.7" font-size="22" fill="#2a2a2a" stroke="#2a2a2a" stroke-width="0.45" font-weight="400" >Trash</text></g></svg></div>
<svg class="abs" width="1884" height="1120" style="left:0;top:0" font-family='"Liberation Sans",sans-serif'><rect x="22" y="1008" width="1840" height="140" rx="8" fill="#5a85bb"/><g transform="translate(38.9,1026.5)">
<defs><linearGradient id="fnL" x1="0" y1="0" x2="0" y2="1"><stop offset="0" stop-color="#5ac8f8"/><stop offset="1" stop-color="#2f72e0"/></linearGradient>
<linearGradient id="fnR" x1="0" y1="0" x2="0" y2="1"><stop offset="0" stop-color="#f8f8f8"/><stop offset="1" stop-color="#e0e4ea"/></linearGradient></defs>
<rect x="0" y="0" width="72.4" height="68.3" rx="3" fill="url(#fnR)"/>
<path d="M3 0 H37 Q30 20 29 38 H40 L43 68.3 H3 Q0 68.3 0 65.3 V3 Q0 0 3 0Z" fill="url(#fnL)"/>
<path d="M37 0 Q30 20 29 38 H40 L43 68.3" fill="none" stroke="#1b3b70" stroke-width="0.8"/>
<rect x="18" y="17" width="3" height="8" rx="1.5" fill="#111"/><rect x="51" y="17" width="3" height="8" rx="1.5" fill="#111"/>
<path d="M14 43 Q36 60 59 43" fill="none" stroke="#111" stroke-width="2.8" stroke-linecap="round"/>
</g><g transform="translate(168.4,1061) rotate(-7.7)">
<rect x="-29" y="-37" width="58" height="74" fill="#fff" stroke="#f6f6f6" stroke-width="3.2" stroke-dasharray="2.6 2.2"/>
<defs><linearGradient id="mlS" x1="0" y1="0" x2="0" y2="1"><stop offset="0" stop-color="#3b78dc"/><stop offset="0.6" stop-color="#7fb0ea"/><stop offset="1" stop-color="#c6def2"/></linearGradient></defs>
<rect x="-23.5" y="-31.5" width="47" height="63" fill="url(#mlS)"/>
<path d="M-24 -25 L-19 -30 L-12 -29 L-4 -17 L4 -4 L-2 4 L-14 -4 L-22 -14Z" fill="#e4e2de" stroke="#5a4a38" stroke-width="0.8"/>
<path d="M-20 -24 L-14 -20 M-18 -27 L-12 -22 M-15 -28 L-10 -22" stroke="#5a4a38" stroke-width="1"/>
<path d="M-4 -2 Q4 -6 10 -6 L12 -2 Q8 4 2 8 Q-4 6 -4 -2Z" fill="#c8a062"/>
<path d="M-4 2 L-16 8 L-12 18 L-2 14 L2 8Z" fill="#b89058"/>
<path d="M2 3 Q16 2 29 16 L27 22 Q14 18 1 12Z" fill="#a89a80" stroke="#5a4a38" stroke-width="0.6"/>
<circle cx="22" cy="26" r="16" fill="none" stroke="#3a5a88" stroke-width="3.5" opacity="0.45"/>
<circle cx="22" cy="26" r="9" fill="none" stroke="#3a5a88" stroke-width="1.6" opacity="0.5"/>
<circle cx="22" cy="26" r="4.5" fill="#4a6a98" opacity="0.6"/>
</g><g transform="translate(263,1061)">
<defs><linearGradient id="spG" x1="0" y1="0" x2="0" y2="1"><stop offset="0" stop-color="#46a0f5"/><stop offset="1" stop-color="#1f62d8"/></linearGradient></defs>
<circle r="40" fill="#fff"/><circle r="36.5" fill="url(#spG)"/>
<path d="M0 -27 L-22 22 L0 8 L22 22Z" fill="#f2f6fb"/>
<path d="M0 -27 L0 8 L-22 22Z" fill="#dfe8f3"/>
<path d="M0 -27 L4 10 L0 20 L-4 10Z" fill="#ffffff"/>
</g><g transform="translate(357,1060.5)">
<defs><radialGradient id="sfG" cx="0.5" cy="0.35" r="0.7"><stop offset="0" stop-color="#38c5ee"/><stop offset="1" stop-color="#1e5fe0"/></radialGradient></defs>
<circle r="38.7" fill="#e8e8e8"/><circle r="35.7" fill="url(#sfG)"/>
<path d="M33.70 0.00 L29.70 0.00 M33.57 2.94 L31.58 2.76 M33.19 5.85 L29.25 5.16 M32.55 8.72 L30.62 8.20 M31.67 11.53 L27.91 10.16 M30.54 14.24 L28.73 13.40 M29.19 16.85 L25.72 14.85 M27.61 19.33 L25.97 18.18 M25.82 21.66 L22.75 19.09 M23.83 23.83 L22.42 22.42 M21.66 25.82 L19.09 22.75 M19.33 27.61 L18.18 25.97 M16.85 29.19 L14.85 25.72 M14.24 30.54 L13.40 28.73 M11.53 31.67 L10.16 27.91 M8.72 32.55 L8.20 30.62 M5.85 33.19 L5.16 29.25 M2.94 33.57 L2.76 31.58 M0.00 33.70 L0.00 29.70 M-2.94 33.57 L-2.76 31.58 M-5.85 33.19 L-5.16 29.25 M-8.72 32.55 L-8.20 30.62 M-11.53 31.67 L-10.16 27.91 M-14.24 30.54 L-13.40 28.73 M-16.85 29.19 L-14.85 25.72 M-19.33 27.61 L-18.18 25.97 M-21.66 25.82 L-19.09 22.75 M-23.83 23.83 L-22.42 22.42 M-25.82 21.66 L-22.75 19.09 M-27.61 19.33 L-25.97 18.18 M-29.19 16.85 L-25.72 14.85 M-30.54 14.24 L-28.73 13.40 M-31.67 11.53 L-27.91 10.16 M-32.55 8.72 L-30.62 8.20 M-33.19 5.85 L-29.25 5.16 M-33.57 2.94 L-31.58 2.76 M-33.70 0.00 L-29.70 0.00 M-33.57 -2.94 L-31.58 -2.76 M-33.19 -5.85 L-29.25 -5.16 M-32.55 -8.72 L-30.62 -8.20 M-31.67 -11.53 L-27.91 -10.16 M-30.54 -14.24 L-28.73 -13.40 M-29.19 -16.85 L-25.72 -14.85 M-27.61 -19.33 L-25.97 -18.18 M-25.82 -21.66 L-22.75 -19.09 M-23.83 -23.83 L-22.42 -22.42 M-21.66 -25.82 L-19.09 -22.75 M-19.33 -27.61 L-18.18 -25.97 M-16.85 -29.19 L-14.85 -25.72 M-14.24 -30.54 L-13.40 -28.73 M-11.53 -31.67 L-10.16 -27.91 M-8.72 -32.55 L-8.20 -30.62 M-5.85 -33.19 L-5.16 -29.25 M-2.94 -33.57 L-2.76 -31.58 M-0.00 -33.70 L-0.00 -29.70 M2.94 -33.57 L2.76 -31.58 M5.85 -33.19 L5.16 -29.25 M8.72 -32.55 L8.20 -30.62 M11.53 -31.67 L10.16 -27.91 M14.24 -30.54 L13.40 -28.73 M16.85 -29.19 L14.85 -25.72 M19.33 -27.61 L18.18 -25.97 M21.66 -25.82 L19.09 -22.75 M23.83 -23.83 L22.42 -22.42 M25.82 -21.66 L22.75 -19.09 M27.61 -19.33 L25.97 -18.18 M29.19 -16.85 L25.72 -14.85 M30.54 -14.24 L28.73 -13.40 M31.67 -11.53 L27.91 -10.16 M32.55 -8.72 L30.62 -8.20 M33.19 -5.85 L29.25 -5.16 M33.57 -2.94 L31.58 -2.76" stroke="#fff" stroke-width="1.2" opacity="0.85"/>
<path d="M24 -24 L4 4 L-4 -4Z" fill="#ef4f4a"/>
<path d="M-24 24 L-4 -4 L4 4Z" fill="#e8e8e8"/>
<path d="M-24 24 L4 4 L0 0Z" fill="#b0b0b0"/>
</g><g transform="translate(414.6,1024.4)">
<clipPath id="slC"><rect x="0" y="0" width="72.7" height="72.8" rx="5"/></clipPath>
<g clip-path="url(#slC)">
<rect x="0" y="0" width="72.7" height="72.8" fill="#e8e8e8"/>
<path d="M0 0 H70 L72.7 10 L15 25 Z" fill="#9fd0d9"/>
<path d="M0 0 L15 25 L30 72.8 H0Z" fill="#4aa683"/>
<path d="M0 55 L30 72.8 H0 Z" fill="#2f1a2a"/>
<path d="M15 25 L72.7 10 L72.7 50 L24 66Z" fill="#ffffff"/>
<path d="M24 66 L72.7 50 V72.8 H26Z" fill="#d6283e"/>
<path d="M58 14 L72.7 10 V50 L66 52Z" fill="#e9a830"/>
<text x="22" y="56" font-family="Liberation Sans" font-weight="700" font-size="40" fill="#222" transform="rotate(-15 36 40)">S</text>
</g>
<circle cx="64.39999999999998" cy="8.5" r="17.3" fill="#ea4b3c" opacity="0.95"/>
<circle cx="64.39999999999998" cy="8.5" r="2.8" fill="#fff"/>
</g><g transform="translate(507,1023)">
<defs><linearGradient id="tbG" x1="0" y1="0" x2="0" y2="1"><stop offset="0" stop-color="#86d4f8"/><stop offset="1" stop-color="#2e7ee0"/></linearGradient>
<radialGradient id="tbM"><stop offset="0" stop-color="#5a3018"/><stop offset="0.6" stop-color="#b8682a"/><stop offset="1" stop-color="#d48a38"/></radialGradient></defs>
<rect x="0" y="0" width="76" height="76.8" rx="4" fill="url(#tbG)"/>
<path d="M38.0 0 V76.8" stroke="#5aa0e0" stroke-width="0.8"/>
<rect x="17" y="15" width="10" height="20" rx="5" fill="#111"/><rect x="19" y="17" width="6" height="11" rx="3" fill="#fff"/>
<rect x="49" y="15" width="10" height="20" rx="5" fill="#111"/><rect x="51" y="17" width="6" height="11" rx="3" fill="#fff"/>
<circle cx="38.0" cy="57" r="20" fill="#f0b040"/><circle cx="38.0" cy="57" r="15" fill="url(#tbM)"/>
<circle cx="38.0" cy="57" r="3.5" fill="#555"/>
</g><g transform="translate(598.7,1020.6)">
<rect x="0" y="0" width="80.7" height="67.4" rx="6" fill="#66a3e8"/>
<path d="M29.35 67.4 L40.35 78.9 L51.35 67.4Z" fill="#66a3e8"/>
<path d="M60 10 Q56 6 51 7 Q42 8 42 18 Q28 17 18 9 Q14 17 20 24 Q17 24 15 23 Q16 31 24 33 Q21 34 19 33 Q22 40 30 41 Q23 46 13 45 Q24 52 36 51 Q58 49 62 22 Q66 19 68 15 Q65 16 62 17 Q66 14 67 10 Q64 12 60 10Z" fill="#0a0a0a" transform="translate(2,2)"/>
</g><g transform="translate(733,1055)">
<defs><linearGradient id="msG" x1="0" y1="0" x2="0" y2="1"><stop offset="0" stop-color="#6cc6fb"/><stop offset="1" stop-color="#1a7cf0"/></linearGradient>
<linearGradient id="msW" x1="0" y1="0" x2="0" y2="1"><stop offset="0" stop-color="#ffffff"/><stop offset="1" stop-color="#dbe6f2"/></linearGradient></defs>
<ellipse cx="0" cy="-2" rx="39" ry="28" fill="url(#msG)"/>
<path d="M-20 16 Q-22 30 -34 39 Q-16 36 -6 24Z" fill="#2384ef"/>
<ellipse cx="14" cy="21" rx="23" ry="19" fill="url(#msW)"/>
<path d="M24 36 Q28 41 34 44 Q24 43 18 38Z" fill="#dbe6f2"/>
<circle cx="3" cy="21" r="3.4" fill="#2560b8"/><circle cx="14" cy="21" r="3.4" fill="#2560b8"/><circle cx="25" cy="21" r="3.4" fill="#2560b8"/>
</g><g transform="translate(826,1061) rotate(-5)">
<rect x="-33" y="-32" width="67" height="72" rx="2" fill="#6b6e72"/>
<rect x="-30" y="-37" width="60" height="73" rx="1" fill="#fafafa"/>
<rect x="-30" y="-37" width="60" height="19" fill="#e05a50"/>
<text x="0" y="-22" text-anchor="middle" font-family="Liberation Sans" font-size="13" fill="#fff">JUN</text>
<text x="0" y="22" text-anchor="middle" font-family="Liberation Sans" font-size="38" fill="#222">25</text>
<rect x="-30" y="33" width="60" height="3" fill="#c8c8c8"/>
</g><g transform="translate(921,1060) rotate(-5)">
<rect x="-34" y="-38" width="68" height="77" fill="#fbfbfb" stroke="#d8c070" stroke-width="0.8"/>
<path d="M-34 -18.0 H34" stroke="#c8c8c8" stroke-width="0.9"/><path d="M-34 -11.7 H34" stroke="#c8c8c8" stroke-width="0.9"/><path d="M-34 -5.4 H34" stroke="#c8c8c8" stroke-width="0.9"/><path d="M-34 0.9 H34" stroke="#c8c8c8" stroke-width="0.9"/><path d="M-34 7.2 H34" stroke="#c8c8c8" stroke-width="0.9"/><path d="M-34 13.5 H34" stroke="#c8c8c8" stroke-width="0.9"/><path d="M-34 19.8 H34" stroke="#c8c8c8" stroke-width="0.9"/><path d="M-34 26.1 H34" stroke="#c8c8c8" stroke-width="0.9"/><path d="M-34 32.4 H34" stroke="#c8c8c8" stroke-width="0.9"/>
<rect x="-34" y="-38" width="68" height="14" fill="#f4cf5a"/>
<path d="M-34 -24 H34" stroke="#b8a060" stroke-width="1" stroke-dasharray="1.5 1.5"/>
</g><g transform="translate(1015,1060) rotate(-7)">
<rect x="-32" y="-38" width="66" height="77" rx="5" fill="#2f3238"/>
<rect x="-33" y="-39" width="64" height="76" rx="5" fill="#f9f9f9"/>
<circle cx="-19" cy="-21" r="5.3" fill="#f08a30" stroke="#ddd" stroke-width="0.8"/><path d="M-8 -25 H24" stroke="#ccc" stroke-width="0.9"/><circle cx="-19" cy="-7" r="5.3" fill="#3ea4f0" stroke="#ddd" stroke-width="0.8"/><path d="M-8 -11 H24" stroke="#ccc" stroke-width="0.9"/><circle cx="-19" cy="7" r="5.3" fill="#62c840" stroke="#ddd" stroke-width="0.8"/><path d="M-8 3 H24" stroke="#ccc" stroke-width="0.9"/><circle cx="-19" cy="21" r="5.3" fill="#b870e0" stroke="#ddd" stroke-width="0.8"/><path d="M-8 17 H24" stroke="#ccc" stroke-width="0.9"/>
</g><g transform="translate(1108.8,1061.1)">
<defs><linearGradient id="itR" x1="0.2" y1="0" x2="0.8" y2="1"><stop offset="0" stop-color="#f25d6c"/><stop offset="0.45" stop-color="#b45fd8"/><stop offset="1" stop-color="#40c0f8"/></linearGradient>
<linearGradient id="itN" x1="0" y1="0" x2="0.3" y2="1"><stop offset="0" stop-color="#f2506a"/><stop offset="0.5" stop-color="#b060e0"/><stop offset="1" stop-color="#40a0f8"/></linearGradient></defs>
<circle r="40" fill="url(#itR)"/><circle r="36.4" fill="#f6f4f8"/>
<path d="M-8 -22 L14 -26 V9 A7 6 0 1 1 10 3 V-14 L-4 -11 V14 A7 6 0 1 1 -8 8Z" fill="url(#itN)"/>
</g><g transform="translate(1202.9,1061)">
<circle r="39.3" fill="#f0f0f0"/>
<ellipse cx="0" cy="-16" rx="10" ry="16" fill="#f3a53a" opacity="0.85" transform="rotate(0)"/><ellipse cx="0" cy="-16" rx="10" ry="16" fill="#f2e04a" opacity="0.85" transform="rotate(45)"/><ellipse cx="0" cy="-16" rx="10" ry="16" fill="#a6d65a" opacity="0.85" transform="rotate(90)"/><ellipse cx="0" cy="-16" rx="10" ry="16" fill="#5cb878" opacity="0.85" transform="rotate(135)"/><ellipse cx="0" cy="-16" rx="10" ry="16" fill="#5aa0e0" opacity="0.85" transform="rotate(180)"/><ellipse cx="0" cy="-16" rx="10" ry="16" fill="#8a7ad0" opacity="0.85" transform="rotate(225)"/><ellipse cx="0" cy="-16" rx="10" ry="16" fill="#c86aa8" opacity="0.85" transform="rotate(270)"/><ellipse cx="0" cy="-16" rx="10" ry="16" fill="#e8504a" opacity="0.85" transform="rotate(315)"/>
<circle r="2" fill="#fff"/>
</g><g transform="translate(1268,1020)">
<rect x="-6" y="14" width="62" height="62" rx="6" fill="#f2c94c" transform="rotate(-14 25 45)"/>
<rect x="-2" y="10" width="63" height="63" rx="6" fill="#4bb0a0" transform="rotate(-12 29 41)"/>
<defs><linearGradient id="scG" x1="0" y1="0" x2="0" y2="1"><stop offset="0" stop-color="#ffffff"/><stop offset="1" stop-color="#b2dde2"/></linearGradient></defs>
<rect x="6" y="3" width="64" height="66" rx="7" fill="url(#scG)" transform="rotate(-9 38 36)"/>
<path d="M24 18 L44 50 M50 14 L30 50" stroke="#3aa898" stroke-width="3.6" stroke-linecap="round"/>
<circle cx="27" cy="56" r="5" fill="none" stroke="#3aa898" stroke-width="2.6"/>
<circle cx="50" cy="53" r="5" fill="none" stroke="#3aa898" stroke-width="2.6"/>
</g><g transform="translate(1391.2,1061)">
<circle r="40.5" fill="#f5f5f5" stroke="#dcdcdc" stroke-width="1"/>
<circle r="36.5" fill="#ffffff" stroke="#e0e0e0" stroke-width="1"/>
<circle r="33.8" fill="#2a7ef0"/>
<circle r="25.5" fill="#f0f0f0"/>
<circle cx="0" cy="0" r="11" fill="#dcdcdc"/>
<path d="M-6 -19.5 H6 V19.7 H-6 V4 L-1.5 0 L-6 -4Z" fill="#4a4a4a"/>
</g><g transform="translate(1448.7,1024.4)">
<defs><linearGradient id="tyG" x1="0" y1="0" x2="0" y2="1"><stop offset="0" stop-color="#f3b354"/><stop offset="1" stop-color="#f0a040"/></linearGradient></defs>
<rect x="0" y="0" width="72.8" height="72.8" rx="9" fill="url(#tyG)"/>
<path d="M26 8 L48 3 L42 26 H48 L46 36 H40 L36 56 Q35 62 42 60 L40 70 Q20 74 22 56 L26 36 H17 L19 26 H28 Z" fill="none" stroke="#fff" stroke-width="3.6" stroke-linejoin="round"/>
<path d="M46 20 L65 27 L46 33Z" fill="#fff"/>
</g><g transform="translate(1540,1024.8)">
<defs><linearGradient id="spgG" x1="0" y1="0" x2="0" y2="1"><stop offset="0" stop-color="#dfe6ea"/><stop offset="1" stop-color="#707070"/></linearGradient></defs>
<rect x="0" y="0" width="78" height="72.4" rx="3" fill="url(#spgG)"/>
<g transform="translate(39.0,36.7)">
<circle r="32" fill="#2e2e2e"/>
<path d="M24.00 0.00 L30.00 0.00 M23.18 6.21 L28.98 7.76 M20.78 12.00 L25.98 15.00 M16.97 16.97 L21.21 21.21 M12.00 20.78 L15.00 25.98 M6.21 23.18 L7.76 28.98 M0.00 24.00 L0.00 30.00 M-6.21 23.18 L-7.76 28.98 M-12.00 20.78 L-15.00 25.98 M-16.97 16.97 L-21.21 21.21 M-20.78 12.00 L-25.98 15.00 M-23.18 6.21 L-28.98 7.76 M-24.00 0.00 L-30.00 0.00 M-23.18 -6.21 L-28.98 -7.76 M-20.78 -12.00 L-25.98 -15.00 M-16.97 -16.97 L-21.21 -21.21 M-12.00 -20.78 L-15.00 -25.98 M-6.21 -23.18 L-7.76 -28.98 M-0.00 -24.00 L-0.00 -30.00 M6.21 -23.18 L7.76 -28.98 M12.00 -20.78 L15.00 -25.98 M16.97 -16.97 L21.21 -21.21 M20.78 -12.00 L25.98 -15.00 M23.18 -6.21 L28.98 -7.76" stroke="#b8b8b8" stroke-width="4.2"/>
<circle r="24" fill="#4a4a4a" stroke="#c4c4c4" stroke-width="3.4"/>
<path d="M0 0 L-13.50 -16.09 M0 0 L20.68 -3.65 M0 0 L-7.18 19.73" stroke="#c0c0c0" stroke-width="5.5" stroke-linecap="round"/>
<circle r="3.2" fill="#e0e0e0"/>
</g></g><path d="M1649 1022.3 V1105" stroke="#2f5a90" stroke-width="2.2"/><g transform="translate(1673.7,1027.6)">
<path d="M0 2 Q0 0 2 0 H24 L30 6 H80 V66 H0Z" fill="#8ecff5"/>
<rect x="0" y="9" width="80" height="57" rx="2" fill="#7ec6f3"/>
<path d="M0 60 H80 M0 62.5 H80" stroke="#a8dcf8" stroke-width="1"/>
<circle cx="38" cy="37" r="18.5" fill="#68b0e2"/>
<path d="M34 26 H42 V36 H49 L38 47 L27 36 H34Z" fill="#8ecdf5"/>
</g><g transform="translate(1777,1017.5)">
<defs><linearGradient id="trG" x1="0" y1="0" x2="1" y2="0"><stop offset="0" stop-color="#c4c8ce"/><stop offset="0.35" stop-color="#e2e4e8"/><stop offset="0.7" stop-color="#e8e9ec"/><stop offset="1" stop-color="#c8ccd2"/></linearGradient>
<linearGradient id="trV" x1="0" y1="0" x2="0" y2="1"><stop offset="0" stop-color="#ffffff" stop-opacity="0"/><stop offset="1" stop-color="#ffffff" stop-opacity="0.5"/></linearGradient></defs>
<path d="M0 10 Q32 4 64 10 L57 79 Q32 86 7 79 Z" fill="url(#trG)"/>
<path d="M0 10 Q32 4 64 10 L57 79 Q32 86 7 79 Z" fill="url(#trV)"/>
<ellipse cx="32" cy="11" rx="31.5" ry="6.5" fill="#dfe3e8" stroke="#c0c4ca" stroke-width="0.8"/>
<path d="M5 12 L10 2 L17 8 L22 0 L30 9 L38 3 L44 8 L50 0 L56 6 L60 12 Q32 18 5 12Z" fill="#d8d8da" stroke="#7a7a7a" stroke-width="0.7"/>
<path d="M14 12 L20 5 L25 12Z" fill="#4a4a4a"/><path d="M22 11 L27 6 L33 12Z" fill="#5abfa0"/>
<path d="M32 12 L38 4 L44 12Z" fill="#2a4a9a"/><path d="M40 11 L45 6 L50 12Z" fill="#c06a30"/>
<path d="M47 12 L53 7 L57 12Z" fill="#7a7a7a"/>
<path d="M14 30 Q32 22 50 28" fill="none" stroke="#ffffff" stroke-width="3" opacity="0.8"/>
</g><circle cx="74" cy="1111.5" r="4.2" fill="#0d1535"/><circle cx="356" cy="1111.5" r="4.2" fill="#0d1535"/><circle cx="450" cy="1111.5" r="4.2" fill="#0d1535"/><circle cx="544" cy="1111.5" r="4.2" fill="#0d1535"/><circle cx="638" cy="1111.5" r="4.2" fill="#0d1535"/><circle cx="1484" cy="1111.5" r="4.2" fill="#0d1535"/></svg>
<svg class="abs" width="1884" height="1120" style="left:0;top:0"><rect x="1749" y="266.6" width="120" height="78.2" rx="23" fill="none" stroke="#ef7329" stroke-width="10"/><rect x="1755" y="991.8" width="101.3" height="118.9" rx="20" fill="none" stroke="#ef7329" stroke-width="10"/></svg>
</body></html>
